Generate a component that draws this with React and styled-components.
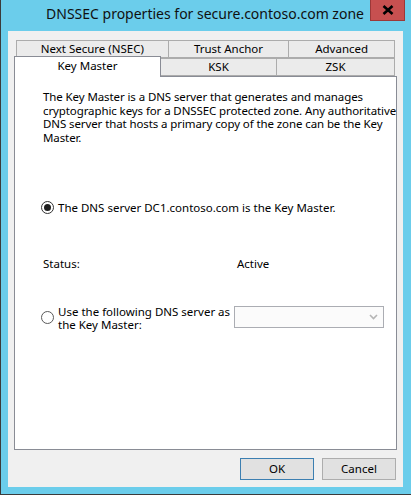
import React from "react";
import styled, { createGlobalStyle } from "styled-components";

const Global = createGlobalStyle`
  html, body { margin: 0; padding: 0; background: #ffffff; }
  body { font-family: "Noto Sans", "Liberation Sans", sans-serif; }
`;

const Window = styled.div`
  width: 410px;
  height: 494px;
  background: #6bcdeb;
  border-left: 1px solid #3b3b3b;
  border-bottom: 1px solid #3b3b3b;
  display: flex;
  flex-direction: column;
`;

const TitleBar = styled.div`
  height: 31px;
  display: flex;
  align-items: flex-start;
`;

const Title = styled.div`
  flex: 1;
  text-align: center;
  padding-top: 4px;
  padding-left: 39px;
  font-size: 14px;
  color: #101010;
  line-height: 20px;
`;

const CloseButton = styled.div`
  width: 33px;
  height: 20px;
  margin-right: 6px;
  background: #c75050;
  border: 1px solid #9c3838;
  border-top: none;
  display: flex;
  align-items: center;
  justify-content: center;
`;

const Client = styled.div`
  flex: 1;
  margin: 0 8px 7px 7px;
  background: #f0f0f0;
  padding: 9px 6px 7px 6px;
  display: flex;
  flex-direction: column;
`;

const TabRow = styled.div`
  display: flex;
  height: ${(p) => p.$h}px;
  padding-left: ${(p) => p.$indent}px;
  padding-right: 2px;
  align-items: flex-end;
`;

const Tab = styled.div`
  width: ${(p) => p.$w}px;
  height: 100%;
  box-sizing: border-box;
  background: ${(p) => (p.$active ? "#ffffff" : "#ebebeb")};
  border: 1px solid #acacac;
  border-left: ${(p) => (p.$first ? "1px solid #acacac" : "none")};
  border-bottom: ${(p) => (p.$active ? "none" : "1px solid #acacac")};
  font-size: 11.5px;
  color: #000;
  text-align: center;
  line-height: ${(p) => (p.$active ? 17 : 16)}px;
  position: relative;
  z-index: ${(p) => (p.$active ? 2 : 1)};
  ${(p) => p.$active && "margin-top: -2px; height: calc(100% + 3px); border-color: #898c95; border-left: 1px solid #898c95; margin-bottom: -1px;"}
`;

const Panel = styled.div`
  height: 374px;
  box-sizing: border-box;
  background: #ffffff;
  border: 1px solid #898c95;
  padding: 13px 6px 0 28px;
  display: flex;
  flex-direction: column;
  font-size: 11.5px;
  color: #000;
`;

const Description = styled.p`
  margin: 0;
  line-height: 13.5px;
  white-space: nowrap;
  letter-spacing: -0.1px;
`;

const RadioRow = styled.div`
  display: flex;
  align-items: ${(p) => (p.$top ? "flex-start" : "center")};
  margin-top: ${(p) => p.$mt}px;
  margin-left: -2px;
  gap: 4px;
  flex-shrink: 0;
`;

const Radio = styled.span`
  width: 13px;
  height: 13px;
  box-sizing: border-box;
  border-radius: 50%;
  border: 1px solid ${(p) => (p.$checked ? "#333333" : "#5a5a5a")};
  background: #ffffff;
  display: flex;
  align-items: center;
  justify-content: center;
  flex-shrink: 0;
  margin-top: ${(p) => (p.$top ? 6 : 0)}px;

  &::after {
    content: "";
    display: ${(p) => (p.$checked ? "block" : "none")};
    width: 7px;
    height: 7px;
    border-radius: 50%;
    background: #1f1f1f;
  }
`;

const Label = styled.span`
  line-height: 13px;
  width: ${(p) => (p.$w ? `${p.$w}px` : "auto")};
`;

const StatusRow = styled.div`
  display: grid;
  grid-template-columns: 194px 1fr;
  margin-top: ${(p) => p.$mt}px;
  line-height: 13px;
`;

const OtherRow = styled.div`
  display: flex;
  align-items: flex-start;
  margin-top: 35px;
`;

const Combo = styled.div`
  margin-left: 2px;
  margin-top: 1px;
  width: 150px;
  height: 22px;
  flex-shrink: 0;
  box-sizing: border-box;
  border: 1px solid #abadb3;
  background: #fbfbfb;
  display: flex;
  align-items: center;
  justify-content: flex-end;
  padding-right: 5px;
`;

const ButtonBar = styled.div`
  display: flex;
  justify-content: flex-end;
  gap: 8px;
  margin-top: 8px;
  padding-right: 1px;
`;

const Button = styled.div`
  width: 74px;
  height: 22px;
  box-sizing: border-box;
  background: #e1e1e1;
  border: 1px solid ${(p) => (p.$default ? "#3c7fb1" : "#adadad")};
  font-size: 11.5px;
  line-height: 20px;
  text-align: center;
  color: #000;
`;

export default function App() {
  return (
    <>
      <Global />
      <Window>
        <TitleBar>
          <Title>DNSSEC properties for secure.contoso.com zone</Title>
          <CloseButton>
            <svg width="12" height="10" viewBox="0 0 12 10">
              <path d="M1.5 1 L10.5 9 M10.5 1 L1.5 9" stroke="#000" strokeWidth="2.6" />
            </svg>
          </CloseButton>
        </TitleBar>
        <Client>
          <TabRow $h={18} $indent={2}>
            <Tab $w={153} $first>Next Secure (NSEC)</Tab>
            <Tab $w={121}>Trust Anchor</Tab>
            <Tab $w={106}>Advanced</Tab>
          </TabRow>
          <TabRow $h={18} $indent={0}>
            <Tab $w={147} $first $active>Key Master</Tab>
            <Tab $w={116}>KSK</Tab>
            <Tab $w={118}>ZSK</Tab>
          </TabRow>
          <Panel>
            <Description>
              The Key Master is a DNS server that generates and manages
              <br />
              cryptographic keys for a DNSSEC protected zone. Any authoritative
              <br />
              DNS server that hosts a primary copy of the zone can be the Key
              <br />
              Master.
            </Description>
            <RadioRow $mt={57}>
              <Radio $checked />
              <Label>The DNS server DC1.contoso.com is the Key Master.</Label>
            </RadioRow>
            <StatusRow $mt={43}>
              <span>Status:</span>
              <span>Active</span>
            </StatusRow>
            <OtherRow>
              <RadioRow $mt={0} $top>
                <Radio $top />
                <Label $w={174}>Use the following DNS server as the Key Master:</Label>
              </RadioRow>
              <Combo>
                <svg width="9" height="6" viewBox="0 0 9 6">
                  <path d="M1 1 L4.5 4.5 L8 1" stroke="#b5b5b5" strokeWidth="1.6" fill="none" />
                </svg>
              </Combo>
            </OtherRow>
          </Panel>
          <ButtonBar>
            <Button $default>OK</Button>
            <Button>Cancel</Button>
          </ButtonBar>
        </Client>
      </Window>
    </>
  );
}
